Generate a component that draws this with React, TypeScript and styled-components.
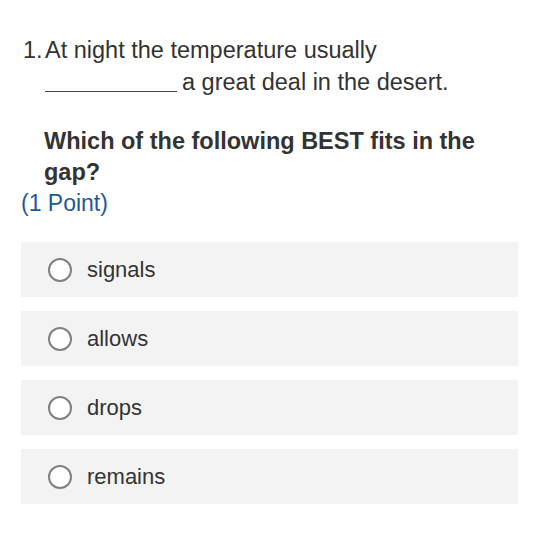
import React from "react";
import styled, { createGlobalStyle } from "styled-components";

const Global = createGlobalStyle`
  html, body { margin: 0; padding: 0; background: #ffffff; }
  body { font-family: "Liberation Sans", Arial, sans-serif; color: #333333; }
`;

const Page = styled.div`
  width: 539px;
  padding: 35px 21px 0 21px;
  box-sizing: border-box;
`;

const QuestionRow = styled.div`
  display: flex;
  font-size: 23.5px;
  line-height: 31px;
  color: #333333;
`;

const Number = styled.span`
  width: 22px;
  flex: none;
  margin-left: 2px;
`;

const Body = styled.div`
  flex: 1;
  white-space: nowrap;
`;

const Blank = styled.span`
  display: inline-block;
  width: 132px;
  border-bottom: 1.5px solid #444;
  height: 25px;
  margin-right: 5px;
  margin-bottom: -2px;
  vertical-align: baseline;
`;

const Prompt = styled.div`
  margin-top: 28px;
  font-weight: bold;
  font-size: 23.5px;
  line-height: 31px;
  color: #333333;
  padding-left: 23px;
  white-space: nowrap;
`;

const Points = styled.div`
  font-size: 23px;
  line-height: 31px;
  color: #1f5a96;
`;

const Options = styled.div`
  margin-top: 23px;
  display: flex;
  flex-direction: column;
  gap: 14px;
  width: 497px;
`;

const Option = styled.label`
  display: flex;
  align-items: center;
  height: 55px;
  background: #f3f3f3;
  padding-left: 27px;
  box-sizing: border-box;
  font-size: 22px;
  color: #333333;
`;

const Radio = styled.span`
  width: 24px;
  height: 24px;
  box-sizing: border-box;
  border-radius: 50%;
  border: 2px solid #808080;
  background: #ffffff;
  flex: none;
  margin-right: 15px;
`;

const choices = ["signals", "allows", "drops", "remains"];

export default function App() {
  return (
    <>
      <Global />
      <Page>
        <QuestionRow>
          <Number>1.</Number>
          <Body>
            At night the temperature usually
            <br />
            <Blank />a great deal in the desert.
          </Body>
        </QuestionRow>
        <Prompt>
          Which of the following BEST fits in the
          <br />
          gap?
        </Prompt>
        <Points>(1 Point)</Points>
        <Options>
          {choices.map((c) => (
            <Option key={c}>
              <Radio />
              {c}
            </Option>
          ))}
        </Options>
      </Page>
    </>
  );
}
